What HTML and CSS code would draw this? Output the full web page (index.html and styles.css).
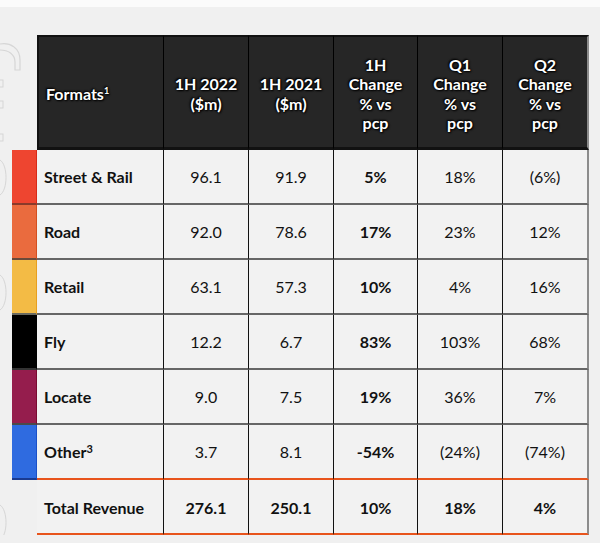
FILE: index.html
```html
<!DOCTYPE html>
<html>
<head>
<meta charset="utf-8">
<link rel="stylesheet" href="styles.css">
</head>
<body>
<div class="top"></div>
<div class="wrap">
  <svg class="mark" width="24" height="543" viewBox="0 0 24 543">
    <path d="M0 44 C10 42 20 48 20 60 L20 70 L15 70 L15 62 C15 54 8 50 0 50" fill="none" stroke="#d6d6d6" stroke-width="1.2"/>
    <rect x="-2" y="80" width="5" height="7" fill="none" stroke="#d6d6d6"/>
    <rect x="-2" y="101" width="5" height="7" fill="none" stroke="#d6d6d6"/>
    <rect x="-2" y="134" width="5" height="7" fill="none" stroke="#d6d6d6"/>
    <path d="M0 160 C8 165 8 190 0 195" fill="none" stroke="#d6d6d6"/>
    <path d="M0 275 C8 280 8 305 0 310" fill="none" stroke="#d6d6d6"/>
    <path d="M0 505 C8 510 8 535 0 540" fill="none" stroke="#d6d6d6"/>
  </svg>
  <table class="rev">
    <colgroup>
      <col class="c-sw"><col class="c-fmt"><col class="c-n"><col class="c-n"><col class="c-n2"><col class="c-n"><col class="c-last">
    </colgroup>
    <thead>
      <tr>
        <th class="sw-h"></th>
        <th class="fmt">Formats<sup>1</sup></th>
        <th>1H 2022<br>($m)</th>
        <th>1H 2021<br>($m)</th>
        <th>1H<br>Change<br>% vs<br>pcp</th>
        <th>Q1<br>Change<br>% vs<br>pcp</th>
        <th class="last">Q2<br>Change<br>% vs<br>pcp</th>
      </tr>
    </thead>
    <tbody>
      <tr>
        <td class="sw sw-street"></td><td class="lbl">Street &amp; Rail</td>
        <td>96.1</td><td>91.9</td><td class="b">5%</td><td>18%</td><td class="last">(6%)</td>
      </tr>
      <tr>
        <td class="sw sw-road"></td><td class="lbl">Road</td>
        <td>92.0</td><td>78.6</td><td class="b">17%</td><td>23%</td><td class="last">12%</td>
      </tr>
      <tr>
        <td class="sw sw-retail"></td><td class="lbl">Retail</td>
        <td>63.1</td><td>57.3</td><td class="b">10%</td><td>4%</td><td class="last">16%</td>
      </tr>
      <tr>
        <td class="sw sw-fly"></td><td class="lbl">Fly</td>
        <td>12.2</td><td>6.7</td><td class="b">83%</td><td>103%</td><td class="last">68%</td>
      </tr>
      <tr>
        <td class="sw sw-locate"></td><td class="lbl">Locate</td>
        <td>9.0</td><td>7.5</td><td class="b">19%</td><td>36%</td><td class="last">7%</td>
      </tr>
      <tr class="other">
        <td class="sw sw-other"></td><td class="lbl">Other<sup class="s3">3</sup></td>
        <td>3.7</td><td>8.1</td><td class="b">-54%</td><td>(24%)</td><td class="last">(74%)</td>
      </tr>
      <tr class="total">
        <td class="sw-h"></td><td class="lbl">Total Revenue</td>
        <td>276.1</td><td>250.1</td><td>10%</td><td>18%</td><td class="last">4%</td>
      </tr>
    </tbody>
  </table>
</div>
</body>
</html>
```

FILE: styles.css
```css
html, body {
  margin: 0;
  background: #f0f0f0;
}
body {
  font-family: Lato, "Open Sans", sans-serif;
  color: #111;
}
.top {
  height: 7px;
  background: #fbfbfb;
}
.wrap {
  position: relative;
  padding: 28px 0 0 12px;
}
.mark {
  position: absolute;
  left: 0;
  top: -7px;
}
.rev {
  position: relative;
  border-collapse: separate;
  border-spacing: 0;
  table-layout: fixed;
  width: 577px;
}
.c-sw { width: 25px; }
.c-fmt { width: 127px; }
.c-n { width: 85px; }
.c-n2 { width: 84px; }
.c-last { width: 86px; }

thead tr { height: 115px; }
thead th {
  background: #262626;
  color: #fff;
  font-size: 16px;
  font-weight: 700;
  line-height: 19.5px;
  text-align: center;
  padding: 3px 0 0;
  border-top: 2px solid #111;
  border-bottom: 3px solid #111;
  border-right: 1px solid #000;
  text-shadow: 0 0 2px #000, 1px 1px 2px #000, -1px -1px 2px #000;
}
thead th.fmt {
  text-align: left;
  padding-left: 7px;
  border-left: 2px solid #111;
}
thead th.last {
  border-right: 2px solid #8c8c8c;
}
th.sw-h, td.sw-h {
  background: transparent;
  border: none;
}
sup {
  font-size: 9px;
  line-height: 0;
  vertical-align: 6px;
}
sup.s3 {
  font-size: 11px;
  vertical-align: 5px;
}

tbody tr { height: 55px; }
tbody td {
  background: #f2f2f2;
  font-size: 16px;
  text-align: center;
  padding: 0;
  border-bottom: 2px solid #666;
  border-right: 1px solid #111;
}
tbody td.lbl {
  text-align: left;
  padding-left: 7px;
  font-weight: 700;
}
tbody td.b { font-weight: 700; }
tbody td.last { border-right: 2px solid #8c8c8c; }
tbody tr.other td { border-bottom: 2px solid #e8541c; }
tbody tr.total td { border-bottom: 2px solid #e8541c; font-weight: 700; padding-top: 2px; }
tbody tr.total td.sw-h { border: none; }

td.sw { border-right: 1px solid transparent; }
.sw-street { background: #ee4530 !important; border-right-color: #d82a18 !important; border-bottom-color: #8a3a2a !important; }
.sw-road { background: #ea6b3e !important; border-right-color: #d44f20 !important; border-bottom-color: #6a4a3a !important; }
.sw-retail { background: #f3bb45 !important; border-right-color: #e8a020 !important; border-bottom-color: #6a6a60 !important; }
.sw-fly { background: #000 !important; border-right-color: #000 !important; border-bottom-color: #333 !important; }
.sw-locate { background: #951d4d !important; border-right-color: #7a0a30 !important; border-bottom-color: #4a4a4a !important; }
tbody tr.other td.sw-other { background: #2f6be0; border-right-color: #1a50c8; border-bottom: 2px solid #1a3a90; }
```
